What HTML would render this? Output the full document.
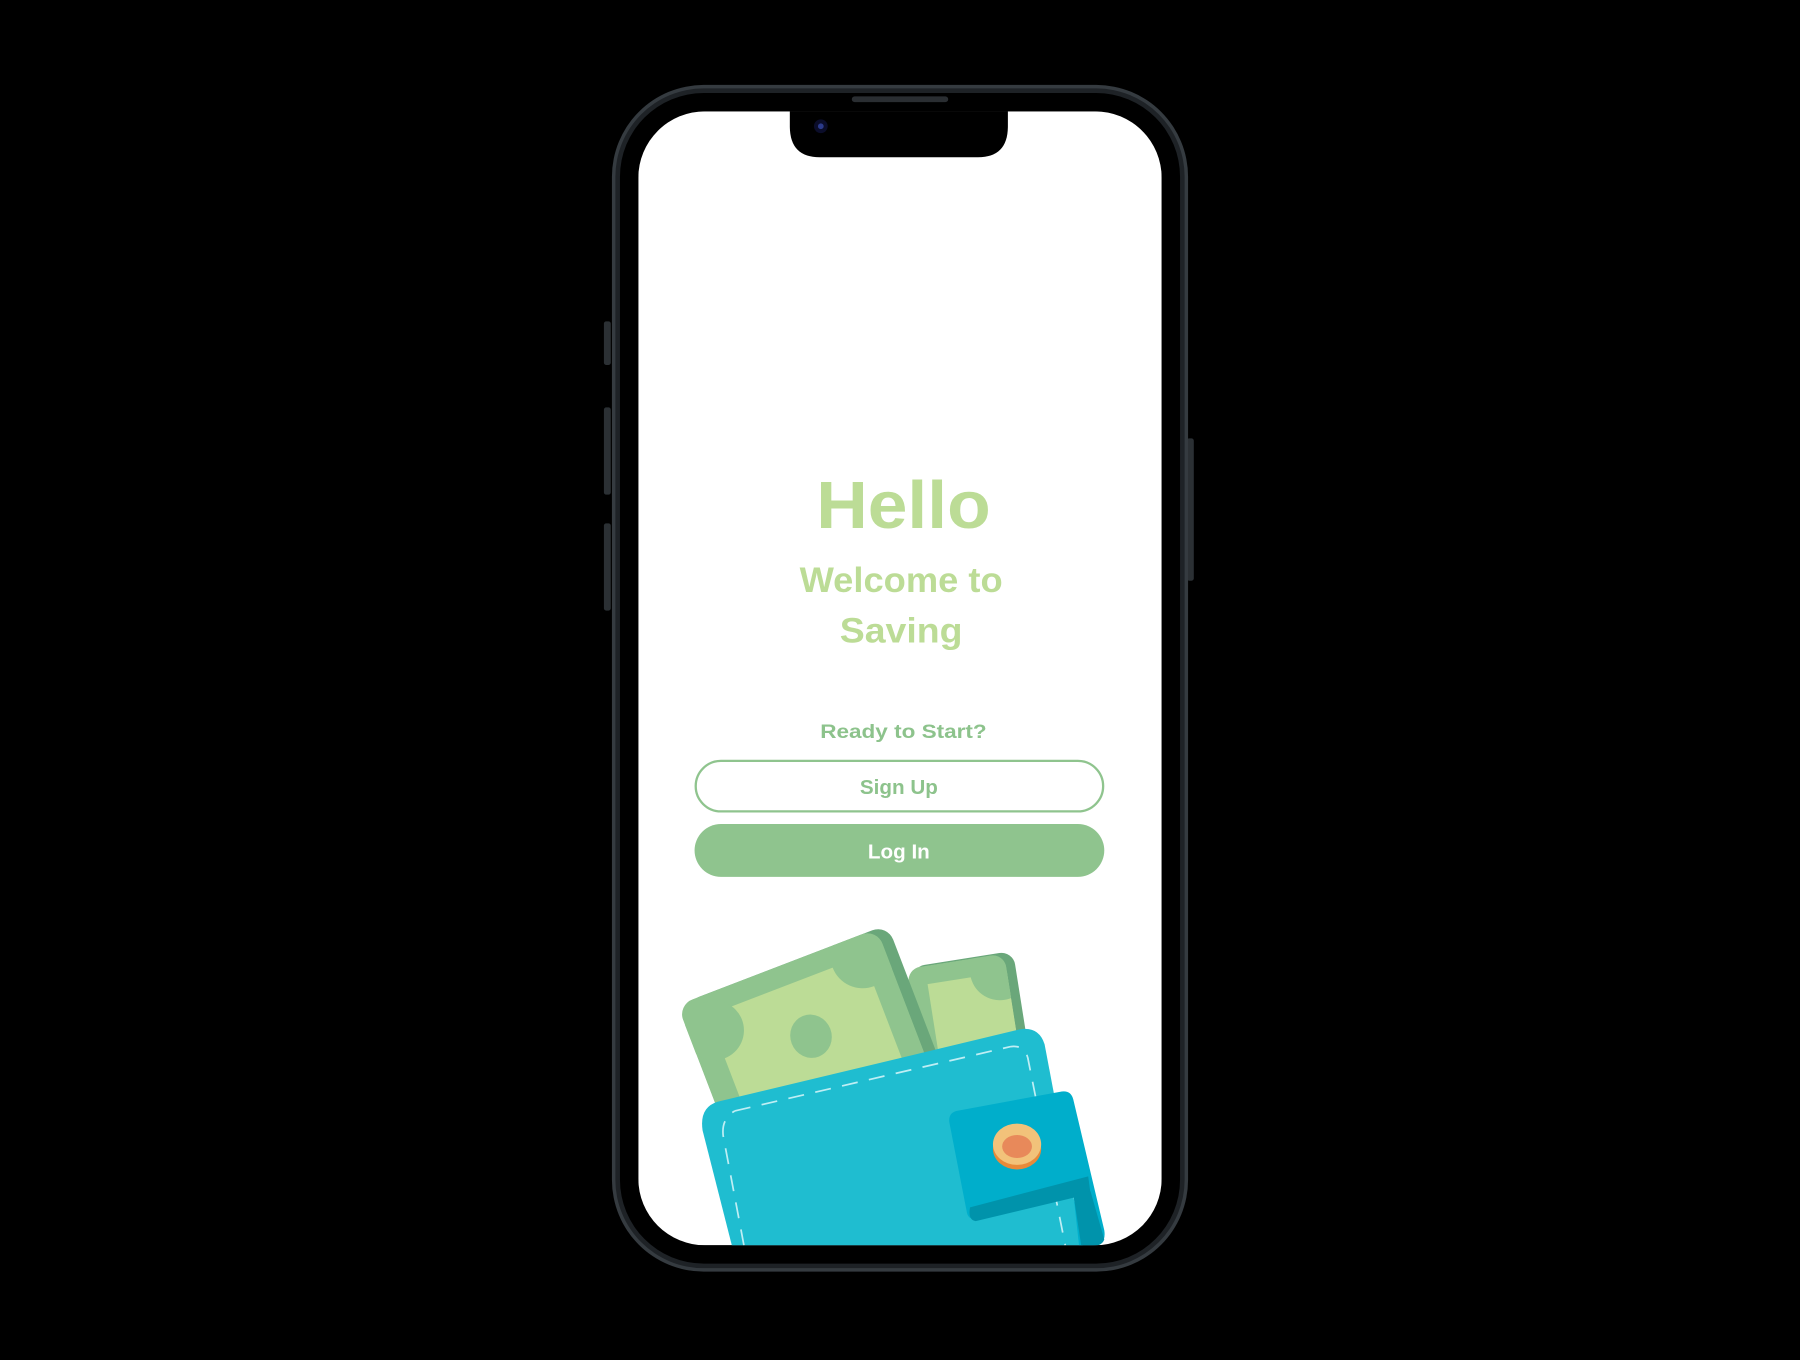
<!DOCTYPE html>
<html><head><meta charset="utf-8"><style>
html,body{margin:0;padding:0;background:#000;width:1800px;height:1360px;overflow:hidden}
svg{display:block}
text{font-family:"Liberation Sans",Arial,sans-serif;font-weight:bold;text-anchor:middle}
</style></head><body>
<svg width="1800" height="1360" viewBox="0 0 1568 1185" xmlns="http://www.w3.org/2000/svg">
<defs>
<clipPath id="scr"><rect x="556" y="97" width="456" height="988" rx="58"/></clipPath>
<clipPath id="bb"><rect x="796" y="836" width="86" height="130" rx="12"/></clipPath>
<clipPath id="fb"><rect x="606" y="838" width="186" height="150" rx="14"/></clipPath>
</defs>
<rect width="1568" height="1185" fill="#000"/>
<rect x="526" y="280" width="6" height="38" rx="2" fill="#2b3034"/>
<rect x="526" y="355" width="6" height="76" rx="2" fill="#2b3034"/>
<rect x="526" y="456" width="6" height="76" rx="2" fill="#2b3034"/>
<rect x="1034" y="382" width="6" height="124" rx="2" fill="#2b3034"/>
<rect x="533" y="74" width="502" height="1034" rx="80" fill="#353b40"/>
<rect x="536" y="77" width="496" height="1028" rx="77" fill="#1e2226"/>
<rect x="540" y="81" width="488" height="1020" rx="73" fill="#000"/>
<g clip-path="url(#scr)">
<rect x="556" y="97" width="456" height="988" fill="#fff"/>
<g transform="rotate(-9 845 880)">
<rect x="800" y="835" width="90" height="130" rx="12" fill="#6aa77a"/>
<g clip-path="url(#bb)">
<rect x="796" y="836" width="86" height="130" fill="#8fc48e"/>
<rect x="812" y="852" width="70" height="100" fill="#bcdc96"/>
<circle cx="876" cy="850" r="26" fill="#8fc48e"/>
</g>
</g>
<g transform="rotate(-21 700 900)">
<rect x="612" y="838" width="190" height="150" rx="14" fill="#6aa77a"/>
<g clip-path="url(#fb)">
<rect x="606" y="838" width="186" height="150" fill="#8fc48e"/>
<rect x="628" y="856" width="144" height="120" fill="#bcdc96"/>
<circle cx="628" cy="870" r="26" fill="#8fc48e"/>
<circle cx="772" cy="856" r="28" fill="#8fc48e"/>
<circle cx="700" cy="985" r="30" fill="#8fc48e"/>
<ellipse cx="705" cy="905" rx="18" ry="19" fill="#8fc48e"/>
</g>
</g>
<path d="M625 960 L888 897 Q905 894 910 910 L945 1095 L640 1095 L612 985 Q609 965 625 960 Z" fill="#1fbdd0"/>
<path d="M640 968 L880 912 Q894 910 896 925 L928 1085 M648 1085 L630 990 Q628 975 640 968" fill="none" stroke="#bfeef4" stroke-width="1.5" stroke-dasharray="14 10"/>
<path d="M833 968 L925 951 Q933 950 935 958 L962 1072 Q964 1085 952 1085 L940 1085 L935 1040 L850 1062 Q843 1063 842 1055 L827 978 Q826 970 833 968 Z" fill="#00aecb"/>
<path d="M845 1052 L948 1025 L950 1040 L850 1064 Q843 1063 845 1052 Z" fill="#0093ab"/>
<path d="M935 1040 L950 1038 L962 1080 Q960 1086 950 1086 L942 1086 Z" fill="#0093ab"/>
<ellipse cx="886" cy="1001" rx="21" ry="18" fill="#e88a3a"/>
<ellipse cx="886" cy="997" rx="21" ry="18" fill="#f2c27a"/>
<ellipse cx="886" cy="999" rx="13" ry="10" fill="#e8895a"/>
</g>
<path d="M688 97 L878 97 L878 110 Q878 137 852 137 L714 137 Q688 137 688 110 Z" fill="#000"/>
<rect x="742" y="84" width="84" height="5" rx="2.5" fill="#2a2e32"/>
<circle cx="715" cy="110" r="6" fill="#0b0d2a"/><circle cx="715" cy="110" r="2.5" fill="#2b3a8a"/>
<text x="787" y="460" font-size="58" fill="#bcdc96" textLength="152" lengthAdjust="spacingAndGlyphs">Hello</text>
<text x="785" y="516" font-size="31" fill="#bcdc96" textLength="177" lengthAdjust="spacingAndGlyphs">Welcome to</text>
<text x="785" y="560" font-size="31" fill="#bcdc96" textLength="107" lengthAdjust="spacingAndGlyphs">Saving</text>
<text x="787" y="643" font-size="17" fill="#8dc38c" textLength="145" lengthAdjust="spacingAndGlyphs">Ready to Start?</text>
<rect x="606" y="663" width="355" height="44" rx="22" fill="#fff" stroke="#8fc48e" stroke-width="2"/>
<text x="783" y="692" font-size="18" fill="#8dc38c">Sign Up</text>
<rect x="605" y="718" width="357" height="46" rx="23" fill="#8fc48e"/>
<text x="783" y="748" font-size="18" fill="#fff">Log In</text>
</svg>
</body></html>
